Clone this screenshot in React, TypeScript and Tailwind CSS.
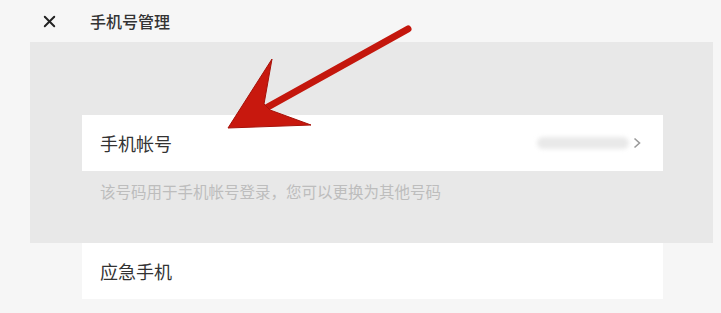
import { X } from 'lucide-react';

const font = { fontFamily: '"Noto Sans CJK SC", "Noto Sans", sans-serif' };

function RedArrow() {
  // hand-drawn annotation arrow pointing at the account row
  return (
    <svg className="pointer-events-none absolute left-0 top-0" width="721" height="313" viewBox="0 0 721 313">
      <line x1="408" y1="29" x2="266" y2="108" stroke="#c4170d" strokeWidth="7" strokeLinecap="round" />
      <path
        d="M228 128 L272 59 L264 104 L270 110 L311 125 Z"
        fill="#c8180e"
        stroke="#a6120a"
        strokeWidth="1"
        strokeLinejoin="round"
      />
    </svg>
  );
}

export default function App() {
  return (
    <div className="relative h-[313px] w-[721px] overflow-hidden bg-[#f6f6f6]" style={font}>
      {/* top bar */}
      <div className="flex h-[42px] items-center">
        <X size={19} strokeWidth={2.4} className="ml-[40px] text-[#222]" />
        <span className="ml-[31px] text-[16px] font-medium text-[#333]">手机号管理</span>
      </div>

      {/* dimmed content area */}
      <div className="ml-[30px] w-[683px] bg-[#e8e8e8] pb-[42px] pl-[52px] pt-[73px]">
        <div className="flex h-[56px] w-[581px] items-center justify-between bg-white pl-[18px] pr-[22px]">
          <span className="text-[18px] text-[#333]">手机帐号</span>
          <div className="flex items-center gap-[4px]">
            <div className="h-[12px] w-[92px] rounded-full bg-[#e9e9e9] blur-[2px]" />
            <svg width="8" height="12" viewBox="0 0 8 12">
              <path d="M1.5 1.5 L6.5 6 L1.5 10.5" fill="none" stroke="#9a9a9a" strokeWidth="1.6" />
            </svg>
          </div>
        </div>
        <p className="mt-[10px] pl-[18px] text-[15.5px] leading-[20px] text-[#bdbdbd]">
          该号码用于手机帐号登录，您可以更换为其他号码
        </p>
      </div>

      <div className="ml-[82px] flex h-[56px] w-[581px] items-center bg-white pl-[18px]">
        <span className="text-[18px] text-[#333]">应急手机</span>
      </div>

      <RedArrow />
    </div>
  );
}
